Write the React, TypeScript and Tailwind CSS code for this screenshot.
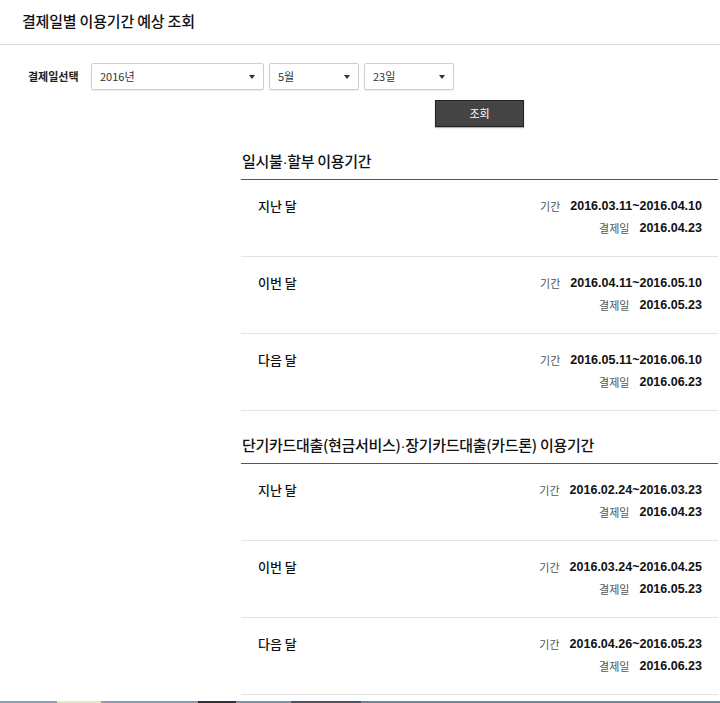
import { ReactNode } from 'react';

type Row = { label: string; period: string; payDay: string };

const sections: { title: string; rows: Row[] }[] = [
  {
    title: '일시불·할부 이용기간',
    rows: [
      { label: '지난 달', period: '2016.03.11~2016.04.10', payDay: '2016.04.23' },
      { label: '이번 달', period: '2016.04.11~2016.05.10', payDay: '2016.05.23' },
      { label: '다음 달', period: '2016.05.11~2016.06.10', payDay: '2016.06.23' },
    ],
  },
  {
    title: '단기카드대출(현금서비스)·장기카드대출(카드론) 이용기간',
    rows: [
      { label: '지난 달', period: '2016.02.24~2016.03.23', payDay: '2016.04.23' },
      { label: '이번 달', period: '2016.03.24~2016.04.25', payDay: '2016.05.23' },
      { label: '다음 달', period: '2016.04.26~2016.05.23', payDay: '2016.06.23' },
    ],
  },
];

const KR = "font-['Noto_Sans_CJK_KR',sans-serif]";

/** 드롭다운 흉내 : 값 + 오른쪽 작은 삼각형 */
function Select({ value, width }: { value: string; width: string }) {
  return (
    <div className={`${width} flex h-[27px] items-center justify-between rounded-[2px] border border-[#cfcfcf] bg-white pl-[8px] pr-[8px] shadow-[0_1px_1px_rgba(0,0,0,0.08)]`}>
      <span className={`${KR} text-[11px] text-[#333]`}>{value}</span>
      <span className="h-0 w-0 border-x-[3.5px] border-t-[4px] border-x-transparent border-t-[#333]" />
    </div>
  );
}

function InfoLine({ name, children }: { name: string; children: ReactNode }) {
  return (
    <div className="flex h-[18px] items-center justify-end gap-[10px]">
      <span className={`${KR} text-[11px] text-[#555]`}>{name}</span>
      <span className="font-['Liberation_Sans',Arial,sans-serif] text-[12.5px] font-bold text-[#111]">{children}</span>
    </div>
  );
}

// 가운뎃점은 전각으로 넓게 찍히지 않도록 라틴 글꼴로
function Title({ text }: { text: string }) {
  const parts = text.split('·');
  return (
    <>
      {parts.map((p, i) => (
        <span key={i}>
          {i > 0 && <span className="font-['Liberation_Sans',Arial,sans-serif]">·</span>}
          {p}
        </span>
      ))}
    </>
  );
}

export default function App() {
  return (
    <div className="relative h-[703px] w-[720px] overflow-hidden bg-white text-[#111]">
      <div className="flex h-[45px] items-center border-b border-[#d8d8d8] pl-[22px]">
        <h1 className={`${KR} -mt-[2px] text-[15px] font-medium tracking-[-0.2px] text-[#111]`}>결제일별 이용기간 예상 조회</h1>
      </div>

      <div className="mt-[18px] flex items-center">
        <span className={`${KR} w-[91px] pl-[28px] text-[11px] font-bold text-[#222]`}>결제일선택</span>
        <div className="flex gap-[5px]">
          <Select value="2016년" width="w-[173px]" />
          <Select value="5월" width="w-[90px]" />
          <Select value="23일" width="w-[90px]" />
        </div>
      </div>

      <div className="flex">
        <div className="w-[241px] shrink-0" />
        <div className="w-[477px]">
          <div className="mt-[10px] flex justify-center">
            <button type="button" className={`${KR} h-[27px] w-[89px] border border-[#222] bg-[#444] text-[11px] text-white shadow-[0_1px_1px_rgba(0,0,0,0.3)]`}>조회</button>
          </div>

          {sections.map((s) => (
            <section key={s.title}>
              <h2 className={`${KR} border-b border-[#555] pb-[7px] pl-[1px] pt-[24px] text-[15px] font-medium leading-[20px] tracking-[-0.3px] text-[#111]`}>
                <Title text={s.title} />
              </h2>
              {s.rows.map((r) => (
                <div key={r.label} className="flex h-[77px] items-start justify-between border-b border-[#e3e3e3] pl-[17px] pr-[16px] pt-[17px]">
                  <span className={`${KR} text-[13px] font-medium leading-[18px] text-[#111]`}>{r.label}</span>
                  <div className="flex flex-col gap-[4px]">
                    <InfoLine name="기간">{r.period}</InfoLine>
                    <InfoLine name="결제일">{r.payDay}</InfoLine>
                  </div>
                </div>
              ))}
            </section>
          ))}
        </div>
      </div>

      {/* 화면 아래에 걸친 작업표시줄 조각 */}
      <div className="absolute bottom-0 left-0 flex h-[2px] w-full bg-[#6f8196]">
        <div className="w-[57px] bg-[#8ea2b6]" />
        <div className="w-[44px] bg-[#e8e6c8]" />
        <div className="w-[97px] bg-[#8a9cb0]" />
        <div className="w-[38px] bg-[#2d3338]" />
        <div className="w-[55px] bg-[#7f93a8]" />
        <div className="w-[70px] bg-[#4a5560]" />
        <div className="flex-1 bg-[#71859a]" />
      </div>
    </div>
  );
}
